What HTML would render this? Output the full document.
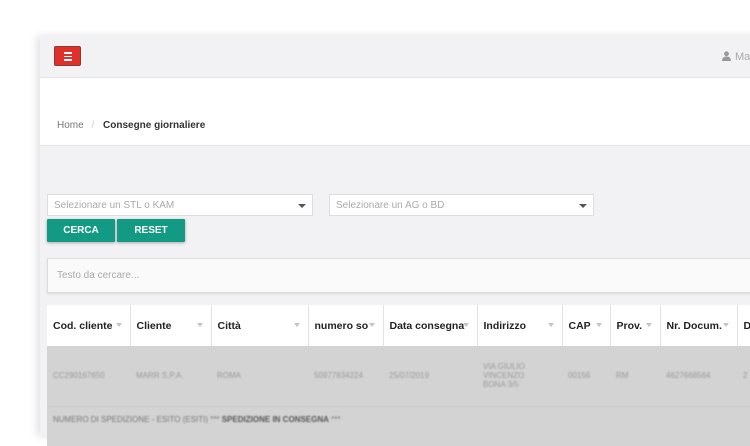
<!DOCTYPE html>
<html><head><style>
*{box-sizing:border-box;margin:0;padding:0}
body{width:750px;height:422px;overflow:hidden;background:#fff;font-family:"Liberation Sans",sans-serif;position:relative}
.app{position:absolute;left:40px;top:36px;width:720px;height:400px;background:#f2f2f4;box-shadow:-3px 0 8px rgba(0,0,0,.12)}
.hdr{position:absolute;left:0;top:0;width:100%;height:42px;background:#f2f2f4;border-bottom:1px solid #e4e4e6}
.burger{position:absolute;left:14px;top:10px;width:27px;height:20px;background:#e0302b;border:1px solid #8a3a2a;border-radius:2px}
.burger i{position:absolute;left:9px;width:8px;height:1.5px;background:#fff}
.user{position:absolute;left:682px;top:15px;font-size:11px;color:#aaa}
.white{position:absolute;left:0;top:42px;width:100%;height:68px;background:#fff;border-bottom:1px solid #e6e6e6}
.bc{position:absolute;left:17px;top:42px;font-size:10px;color:#777}
.bc b{color:#333;margin-left:6px}
.bc span{color:#ccc;margin-left:5px}
.sel{position:absolute;top:158px;height:22px;background:#fff;border:1px solid #ddd;font-size:10px;color:#aaa;padding:5px 6px}
.sel:after{content:"";position:absolute;right:6px;top:9px;border:4px solid transparent;border-top:4px solid #555}
.btn{position:absolute;top:183px;height:23px;background:#129a84;color:#fff;font-size:10px;font-weight:bold;text-align:center;line-height:24px;box-shadow:0 1px 3px rgba(0,0,0,.3);border-radius:1px}
.search{position:absolute;left:7px;top:222px;width:720px;height:35px;background:#fafafa;border:1px solid #ddd;box-shadow:0 1px 2px rgba(0,0,0,.1);font-size:10px;color:#aaa;padding:11px 9px}
table{position:absolute;left:7px;top:269px;border-collapse:collapse;font-size:10.5px;table-layout:fixed;width:720px}
th{background:#fff;height:41px;text-align:left;font-weight:bold;color:#222;padding:0 6px;border-right:1px solid #e2e2e2;position:relative;white-space:nowrap;overflow:hidden}
th:after{content:"";position:absolute;right:8px;top:18px;border:3px solid transparent;border-top:4px solid #c4c4c4}
td{background:#d3d3d3;height:60px;color:#999;padding:0 6px;font-size:8px;overflow:hidden}
td span{filter:blur(0.8px);display:block}
tr.r2 td{height:40px;border-top:1px solid #ccc;vertical-align:top;padding-top:8px}
</style></head><body>
<div class="app">
<div class="hdr"><div class="burger"><i style="top:5px"></i><i style="top:8.5px"></i><i style="top:12px"></i></div>
<div class="user"><svg width="9" height="10" viewBox="0 0 9 10" style="vertical-align:-1px;margin-right:4px"><circle cx="4.5" cy="2.8" r="2.4" fill="#999"/><path d="M0 10 Q0 5.5 4.5 5.5 Q9 5.5 9 10Z" fill="#999"/></svg>Ma</div></div>
<div class="white"><div class="bc">Home <span>/</span> <b>Consegne giornaliere</b></div></div>
<div class="sel" style="left:7px;width:266px">Selezionare un STL o KAM</div>
<div class="sel" style="left:289px;width:265px">Selezionare un AG o BD</div>
<div class="btn" style="left:7px;width:68px">CERCA</div>
<div class="btn" style="left:77px;width:68px">RESET</div>
<div class="search">Testo da cercare...</div>
<table>
<colgroup><col style="width:83px"><col style="width:81px"><col style="width:97px"><col style="width:75px"><col style="width:94px"><col style="width:85px"><col style="width:48px"><col style="width:50px"><col style="width:77px"><col style="width:30px"></colgroup>
<tr><th>Cod. cliente</th><th>Cliente</th><th>Città</th><th>numero so</th><th>Data consegna</th><th>Indirizzo</th><th>CAP</th><th>Prov.</th><th>Nr. Docum.</th><th>D</th></tr>
<tr><td><span>CC290167650</span></td><td><span>MARR S.P.A.</span></td><td><span>ROMA</span></td><td><span>50977834224</span></td><td><span>25/07/2019</span></td><td><span>VIA GIULIO<br>VINCENZO<br>BONA 3/5</span></td><td><span>00156</span></td><td><span>RM</span></td><td><span>4627668564</span></td><td><span>2</span></td></tr>
<tr class="r2"><td colspan="10" style="color:#777"><span>NUMERO DI SPEDIZIONE - ESITO (ESITI) *** <b style="color:#555">SPEDIZIONE IN CONSEGNA</b> ***</span></td></tr>
</table>
</div>
</body></html>
